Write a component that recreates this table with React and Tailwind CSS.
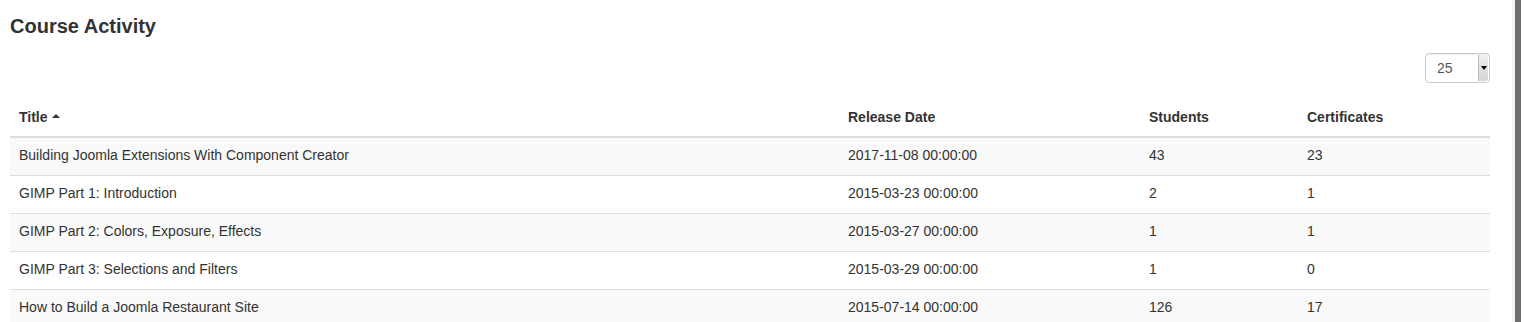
const rows = [
  { title: 'Building Joomla Extensions With Component Creator', date: '2017-11-08 00:00:00', students: 43, certs: 23 },
  { title: 'GIMP Part 1: Introduction', date: '2015-03-23 00:00:00', students: 2, certs: 1 },
  { title: 'GIMP Part 2: Colors, Exposure, Effects', date: '2015-03-27 00:00:00', students: 1, certs: 1 },
  { title: 'GIMP Part 3: Selections and Filters', date: '2015-03-29 00:00:00', students: 1, certs: 0 },
  { title: 'How to Build a Joomla Restaurant Site', date: '2015-07-14 00:00:00', students: 126, certs: 17 },
];

function PageSizeSelect() {
  return (
    <div className="flex h-[30px] w-[65px] items-stretch rounded-[4px] border border-[#ccc] bg-white pl-[11px] shadow-[inset_0_1px_1px_rgba(0,0,0,0.075)]">
      <span className="flex-1 self-center text-[14px] text-[#555]">25</span>
      <span className="my-[1px] mr-[1px] flex w-[10px] items-center justify-center rounded-r-[3px] border-l border-[#bbb] bg-gradient-to-b from-[#f0f0f0] to-[#d4d4d4]">
        <span className="h-0 w-0 border-x-[3px] border-t-[4px] border-x-transparent border-t-black" />
      </span>
    </div>
  );
}

export default function App() {
  return (
    <div className="flex h-[322px] w-[1524px] overflow-hidden bg-white font-['Liberation_Sans',Arial,sans-serif] text-[14px] text-[#333]">
      <div className="w-[1512px] pl-[10px] pr-[22px]">
        <h3 className="pt-[14px] text-[20px] font-bold leading-[24px]">Course Activity</h3>
        <div className="mt-[15px] flex justify-end">
          <PageSizeSelect />
        </div>
        <table className="mt-[15px] w-full border-collapse">
          <thead>
            <tr className="text-left">
              <th className="w-[829px] border-b-2 border-[#ddd] px-[9px] py-[9px] font-bold leading-[20px]">
                <span className="inline-flex items-center gap-[4px]">
                  Title
                  <span className="mt-[-2px] h-0 w-0 border-x-[4px] border-b-[4px] border-x-transparent border-b-[#333]" />
                </span>
              </th>
              <th className="w-[301px] border-b-2 border-[#ddd] px-[9px] py-[9px] font-bold leading-[20px]">Release Date</th>
              <th className="w-[158px] border-b-2 border-[#ddd] px-[9px] py-[9px] font-bold leading-[20px]">Students</th>
              <th className="border-b-2 border-[#ddd] px-[9px] py-[9px] font-bold leading-[20px]">Certificates</th>
            </tr>
          </thead>
          <tbody>
            {rows.map((r, i) => (
              <tr key={r.title} className={i % 2 === 0 ? 'bg-[#f9f9f9]' : 'bg-white'}>
                <td className="border-t border-[#ddd] px-[9px] pt-[7px] pb-[9px] leading-[21px]">{r.title}</td>
                <td className="border-t border-[#ddd] px-[9px] pt-[7px] pb-[9px] leading-[21px]">{r.date}</td>
                <td className="border-t border-[#ddd] px-[9px] pt-[7px] pb-[9px] leading-[21px]">{r.students}</td>
                <td className="border-t border-[#ddd] px-[9px] pt-[7px] pb-[9px] leading-[21px]">{r.certs}</td>
              </tr>
            ))}
          </tbody>
        </table>
      </div>
      <div className="w-[3px] bg-[#f2f2f2]" />
      <div className="w-[6px] bg-[#6e6e6e]" />
    </div>
  );
}
